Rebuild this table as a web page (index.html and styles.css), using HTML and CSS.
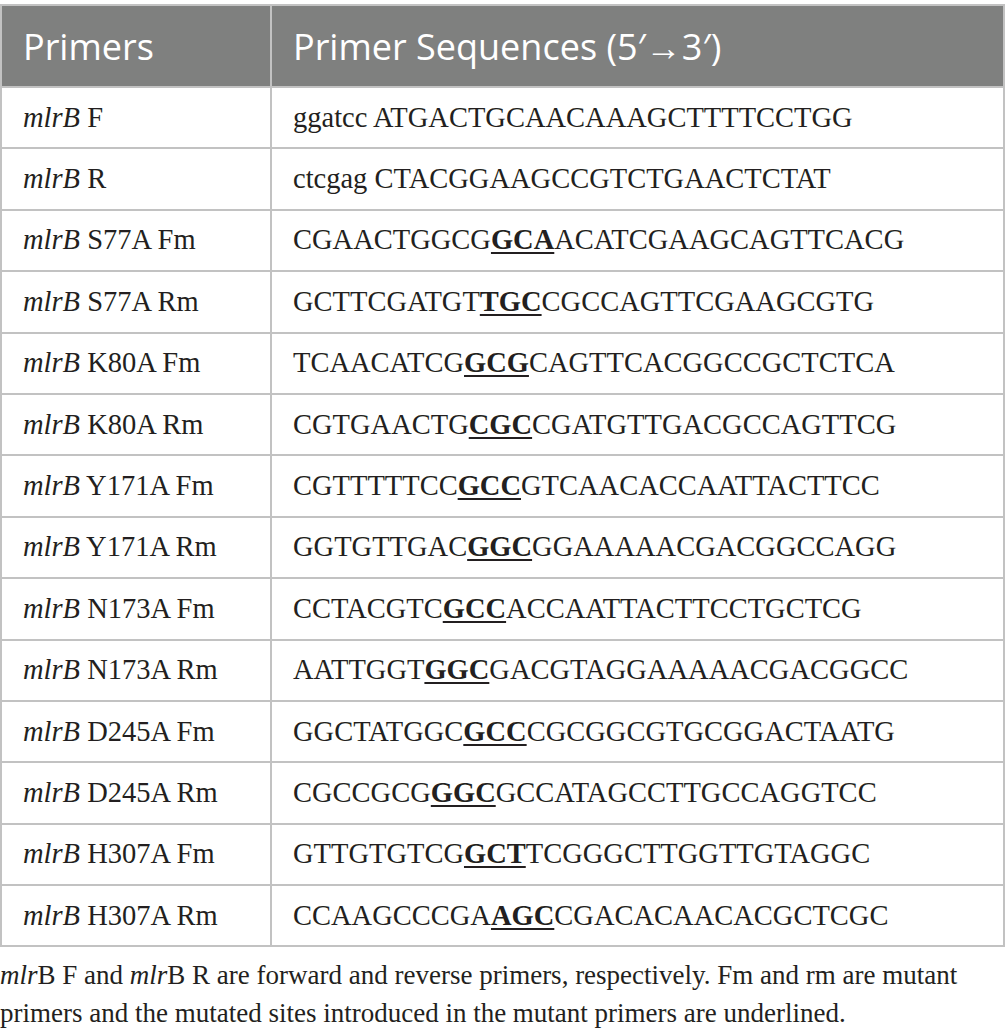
FILE: index.html
```html
<!DOCTYPE html>
<html>
<head>
<meta charset="utf-8">
<link rel="stylesheet" href="styles.css">
</head>
<body>
<table class="primers">
  <thead>
    <tr><th class="c1">Primers</th><th class="c2">Primer Sequences (5′→3′)</th></tr>
  </thead>
  <tbody>
    <tr><td><i>mlrB</i> F</td><td>ggatcc ATGACTGCAACAAAGCTTTTCCTGG</td></tr>
    <tr><td><i>mlrB</i> R</td><td>ctcgag CTACGGAAGCCGTCTGAACTCTAT</td></tr>
    <tr><td><i>mlrB</i> S77A Fm</td><td>CGAACTGGCG<b class="mut">GCA</b>ACATCGAAGCAGTTCACG</td></tr>
    <tr><td><i>mlrB</i> S77A Rm</td><td>GCTTCGATGT<b class="mut">TGC</b>CGCCAGTTCGAAGCGTG</td></tr>
    <tr><td><i>mlrB</i> K80A Fm</td><td>TCAACATCG<b class="mut">GCG</b>CAGTTCACGGCCGCTCTCA</td></tr>
    <tr><td><i>mlrB</i> K80A Rm</td><td>CGTGAACTG<b class="mut">CGC</b>CGATGTTGACGCCAGTTCG</td></tr>
    <tr><td><i>mlrB</i> Y171A Fm</td><td>CGTTTTTCC<b class="mut">GCC</b>GTCAACACCAATTACTTCC</td></tr>
    <tr><td><i>mlrB</i> Y171A Rm</td><td>GGTGTTGAC<b class="mut">GGC</b>GGAAAAACGACGGCCAGG</td></tr>
    <tr><td><i>mlrB</i> N173A Fm</td><td>CCTACGTC<b class="mut">GCC</b>ACCAATTACTTCCTGCTCG</td></tr>
    <tr><td><i>mlrB</i> N173A Rm</td><td>AATTGGT<b class="mut">GGC</b>GACGTAGGAAAAACGACGGCC</td></tr>
    <tr><td><i>mlrB</i> D245A Fm</td><td>GGCTATGGC<b class="mut">GCC</b>CGCGGCGTGCGGACTAATG</td></tr>
    <tr><td><i>mlrB</i> D245A Rm</td><td>CGCCGCG<b class="mut">GGC</b>GCCATAGCCTTGCCAGGTCC</td></tr>
    <tr><td><i>mlrB</i> H307A Fm</td><td>GTTGTGTCG<b class="mut">GCT</b>TCGGGCTTGGTTGTAGGC</td></tr>
    <tr><td><i>mlrB</i> H307A Rm</td><td>CCAAGCCCGA<b class="mut">AGC</b>CGACACAACACGCTCGC</td></tr>
  </tbody>
</table>
<p class="note"><i>mlr</i>B F and <i>mlr</i>B R are forward and reverse primers, respectively. Fm and rm are mutant primers and the mutated sites introduced in the mutant primers are underlined.</p>
</body>
</html>
```

FILE: styles.css
```css
html, body {
  margin: 0;
  padding: 0;
  background: #ffffff;
}
body {
  padding-top: 4px;
  width: 1005px;
}
.primers {
  width: 1005px;
  border-collapse: collapse;
  font-family: "Liberation Serif", "Times New Roman", serif;
  font-size: 28.5px;
  color: #231f20;
}
.primers th {
  background: #7f807f;
  color: #ffffff;
  font-family: "Open Sans", "Noto Sans", sans-serif;
  font-weight: 400;
  font-size: 36px;
  text-align: left;
  height: 80px;
  padding: 0 0 0 21px;
  border: 2px solid #c2c2c2;
  vertical-align: middle;
}
.primers th.c1 {
  width: 247px;
}
.primers td {
  height: 59.4px;
  padding: 0 0 0 21px;
  border: 2px solid #c2c2c2;
  vertical-align: middle;
  white-space: nowrap;
}
.mut {
  font-weight: 700;
  text-decoration: underline;
  text-decoration-thickness: 2px;
  text-underline-offset: 3px;
}
.note {
  margin: 9px 0 0 0;
  padding-right: 40px;
  font-family: "Liberation Serif", "Times New Roman", serif;
  font-size: 27px;
  line-height: 38px;
  color: #231f20;
}
```
